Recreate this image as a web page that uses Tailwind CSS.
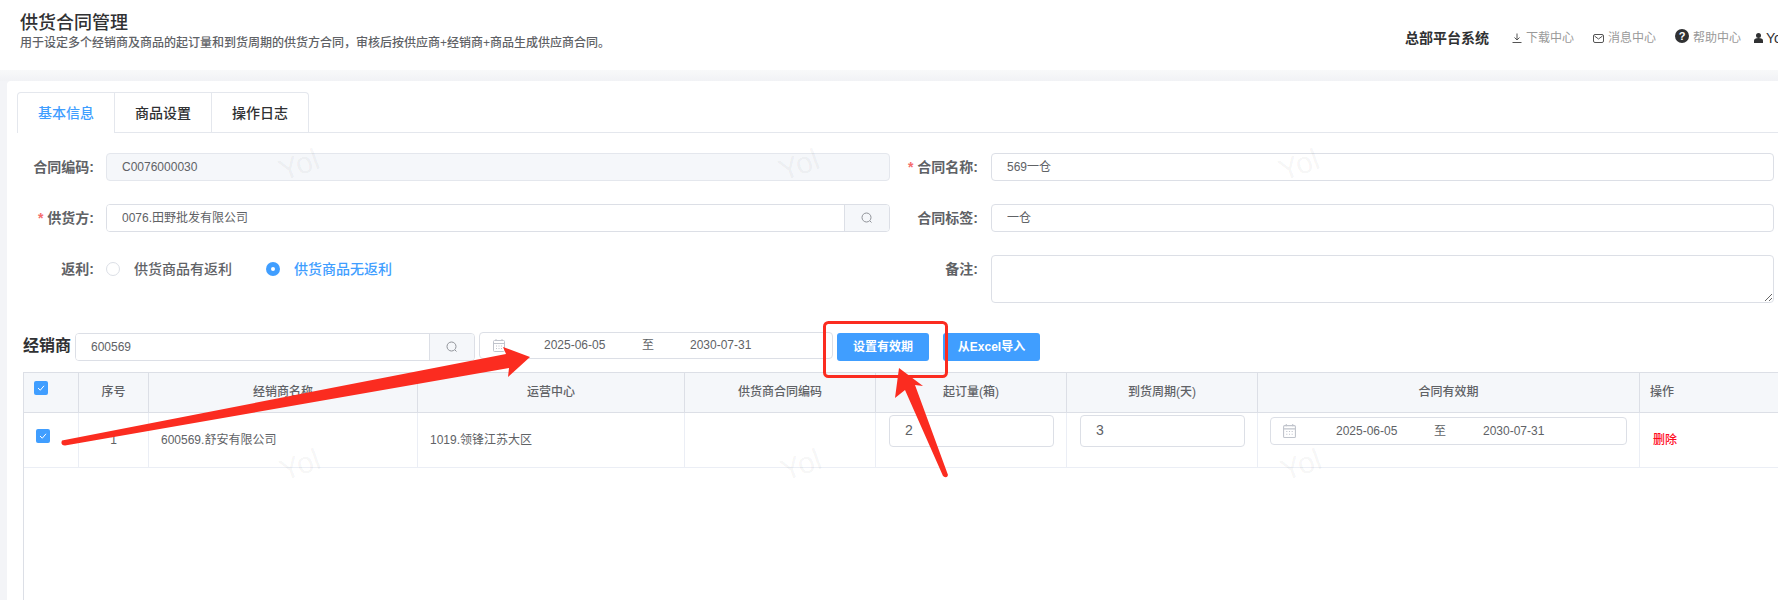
<!DOCTYPE html>
<html lang="zh-CN">
<head>
    <meta charset="UTF-8">
    <meta name="viewport" content="width=device-width, initial-scale=1.0">
    <title>供货合同管理</title>
    <script src="https://cdn.jsdelivr.net/npm/@tailwindcss/browser@4"></script>
</head>
<body class="relative w-[1778px] h-[600px] overflow-hidden bg-[#f3f4f7] text-[#606266] text-xs [font-family:'Liberation_Sans','Noto_Sans_CJK_SC',sans-serif]">

<!-- Header -->
<header class="flex h-[70px] bg-white">
    <div class="pl-5 pt-[11px]">
        <h1 class="text-lg leading-6 font-medium text-[#303133]">供货合同管理</h1>
        <p class="h-4 leading-4 text-xs font-medium text-[#606266]">用于设定多个经销商及商品的起订量和到货周期的供货方合同，审核后按供应商+经销商+商品生成供应商合同。</p>
    </div>
    <div class="ml-auto w-[373px] pt-[30px] flex items-start h-[46px] whitespace-nowrap overflow-hidden text-[#999]">
        <span class="shrink-0 w-[107px] text-sm leading-4 font-bold text-[#303133]">总部平台系统</span>
        <svg class="shrink-0 w-[10px] h-[10px] mt-[3px] mr-[4px]" viewBox="0 0 10 10" fill="none" stroke="#555" stroke-width="1"><path d="M5 0.5V6.5M2.5 4.5L5 7L7.5 4.5M0.5 9.5H9.5"/></svg>
        <span class="shrink-0 w-[67px] leading-4">下载中心</span>
        <svg class="shrink-0 w-[11px] h-[9px] mt-[4px] mr-[4px]" viewBox="0 0 11 9" fill="none" stroke="#555" stroke-width="1"><rect x="0.5" y="0.5" width="10" height="8" rx="1.5"/><path d="M1.5 2L5.5 5L9.5 2"/></svg>
        <span class="shrink-0 w-[67px] leading-4">消息中心</span>
        <span class="shrink-0 flex items-center justify-center w-[14px] h-[14px] -mt-[1px] mr-1 rounded-full bg-[#303133] text-white text-[11px] leading-none font-bold">?</span>
        <span class="shrink-0 w-[61px] leading-4">帮助中心</span>
        <svg class="shrink-0 w-[9px] h-[10px] mt-[3px] mr-[3px]" viewBox="0 0 9 10" fill="#303133"><circle cx="4.5" cy="2.5" r="2.5"/><path d="M0 10V7.5C0 6 1.5 5 4.5 5S9 6 9 7.5V10Z"/></svg>
        <span class="shrink-0 text-sm leading-4 text-[#303133]">Yol</span>
    </div>
</header>

<!-- Card -->
<main class="pt-[11px] pl-[7px] bg-[linear-gradient(#f8f9fa,#f1f2f5_11px,#f3f4f7_11px)]">
    <div class="h-[519px] bg-white rounded-tl pl-[10px] pt-[11px]">
        <!-- Tabs -->
        <div class="flex h-[41px] border-b border-[#e4e7ed] text-sm">
            <div class="flex items-center justify-center w-[98px] h-[41px] pb-px bg-white border border-b-0 border-[#e4e7ed] rounded-tl text-[#409eff] font-medium">基本信息</div>
            <div class="flex items-center justify-center w-[97px] h-[40px] border-t border-r border-[#e4e7ed] text-[#303133] font-medium">商品设置</div>
            <div class="flex items-center justify-center w-[97px] h-[40px] border-t border-r border-[#e4e7ed] rounded-tr text-[#303133] font-medium">操作日志</div>
        </div>

        <!-- Form -->
        <div class="mt-5 flex flex-col gap-[23px] pr-1">
            <div class="flex h-[28px]">
                <div class="flex w-[873px]">
                    <label class="w-[77px] text-right text-sm leading-[28px] font-semibold">合同编码:</label>
                    <div class="ml-3 flex-1 h-[28px] pl-[15px] leading-[26px] border border-[#e4e7ed] rounded bg-[#f5f7fa]">C0076000030</div>
                </div>
                <div class="flex flex-1">
                    <label class="w-[88px] text-right text-sm leading-[28px] font-semibold"><span class="text-[#f56c6c] mr-1">*</span>合同名称:</label>
                    <input value="569一仓" class="ml-[13px] flex-1 h-[28px] px-[15px] pb-[3px] border border-[#dcdfe6] rounded bg-white outline-none">
                </div>
            </div>
            <div class="flex h-[28px]">
                <div class="flex w-[873px]">
                    <label class="w-[77px] text-right text-sm leading-[28px] font-semibold"><span class="text-[#f56c6c] mr-1">*</span>供货方:</label>
                    <div class="ml-3 flex flex-1 h-[28px] border border-[#dcdfe6] rounded overflow-hidden">
                        <input value="0076.田野批发有限公司" class="flex-1 px-[15px] bg-white outline-none">
                        <div class="flex items-center justify-center w-[45px] bg-[#f5f7fa] border-l border-[#dcdfe6]">
                            <svg class="w-3 h-3" viewBox="0 0 12 12" fill="none" stroke="#909399" stroke-width="1"><circle cx="5.5" cy="5.5" r="4.5"/><path d="M9 9L10.5 10.5"/></svg>
                        </div>
                    </div>
                </div>
                <div class="flex flex-1">
                    <label class="w-[88px] text-right text-sm leading-[28px] font-semibold">合同标签:</label>
                    <input value="一仓" class="ml-[13px] flex-1 h-[28px] px-[15px] pb-[3px] border border-[#dcdfe6] rounded bg-white outline-none">
                </div>
            </div>
            <div class="flex h-[48px]">
                <div class="flex w-[873px]">
                    <label class="w-[77px] text-right text-sm leading-[28px] font-semibold">返利:</label>
                    <div class="ml-3 flex items-start h-[28px] pt-[7px] text-sm leading-[14px] font-medium">
                        <span class="w-[14px] h-[14px] rounded-full border border-[#dcdfe6] bg-white"></span>
                        <span class="ml-[14px] w-[98px]">供货商品有返利</span>
                        <span class="ml-[34px] flex items-center justify-center w-[14px] h-[14px] rounded-full bg-[#409eff]"><span class="w-1 h-1 rounded-full bg-white"></span></span>
                        <span class="ml-[14px] text-[#409eff]">供货商品无返利</span>
                    </div>
                </div>
                <div class="flex flex-1">
                    <label class="w-[88px] text-right text-sm leading-[28px] font-semibold">备注:</label>
                    <textarea class="ml-[13px] flex-1 h-[48px] px-[15px] py-1 border border-[#dcdfe6] rounded bg-white outline-none"></textarea>
                </div>
            </div>
        </div>

        <!-- Dealer toolbar -->
        <div class="mt-[30px] flex items-start h-[28px] pl-[6px]">
            <span class="w-[52px] text-base leading-[26px] font-bold text-[#303133]">经销商</span>
            <div class="flex w-[400px] h-[28px] border border-[#dcdfe6] rounded overflow-hidden">
                <input value="600569" class="flex-1 px-[15px] bg-white outline-none">
                <div class="flex items-center justify-center w-[45px] bg-[#f5f7fa] border-l border-[#dcdfe6]">
                    <svg class="w-3 h-3" viewBox="0 0 12 12" fill="none" stroke="#909399" stroke-width="1"><circle cx="5.5" cy="5.5" r="4.5"/><path d="M9 9L10.5 10.5"/></svg>
                </div>
            </div>
            <div class="ml-1 flex items-center w-[354px] h-[27px] -mt-[1px] pl-[13px] border border-[#dcdfe6] rounded leading-[25px] whitespace-nowrap">
                <svg class="w-3 h-[13px] shrink-0" viewBox="0 0 12 13" fill="none" stroke="#c0c4cc" stroke-width="1"><rect x="0.5" y="1.5" width="11" height="11" rx="1"/><path d="M0.5 4.5H11.5M3 0V2M9 0V2M3 7H4M5.5 7H6.5M8 7H9M3 9.5H4M5.5 9.5H6.5M8 9.5H9"/></svg>
                <span class="ml-[39px] w-[62px] -mt-px">2025-06-05</span>
                <span class="ml-[36px] w-3 -mt-px">至</span>
                <span class="ml-[36px] -mt-px">2030-07-31</span>
            </div>
            <button class="ml-1 w-[92px] h-[28px] bg-[#409eff] text-white font-bold rounded-[3px]">设置有效期</button>
            <button class="ml-[14px] w-[97px] h-[28px] bg-[#409eff] text-white font-bold rounded-[3px]">从Excel导入</button>
        </div>

        <!-- Table -->
        <div class="mt-[11px] ml-[6px] h-[228px] border-l border-t border-[#dcdfe6]">
            <table class="table-fixed w-[1755px] border-separate border-spacing-0">
                <thead>
                    <tr class="h-[40px] bg-[#f5f7fa]">
                        <th class="w-[55px] align-top pt-2 pl-[10px] text-left border-r border-b border-[#dcdfe6]">
                            <span class="flex items-center justify-center w-[14px] h-[14px] bg-[#409eff] rounded-[2px]"><svg class="w-[10px] h-[10px]" viewBox="0 0 10 10" fill="none" stroke="#fff" stroke-width="1"><path d="M2 5L4.3 7.2L8 2.8"/></svg></span>
                        </th>
                        <th class="w-[70px] pb-px font-medium border-r border-b border-[#dcdfe6]">序号</th>
                        <th class="w-[269px] pb-px font-medium border-r border-b border-[#dcdfe6]">经销商名称</th>
                        <th class="w-[267px] pb-px font-medium border-r border-b border-[#dcdfe6]">运营中心</th>
                        <th class="w-[191px] pb-px font-medium border-r border-b border-[#dcdfe6]">供货商合同编码</th>
                        <th class="w-[191px] pb-px font-medium border-r border-b border-[#dcdfe6]">起订量(箱)</th>
                        <th class="w-[191px] pb-px font-medium border-r border-b border-[#dcdfe6]">到货周期(天)</th>
                        <th class="w-[382px] pb-px font-medium border-r border-b border-[#dcdfe6]">合同有效期</th>
                        <th class="w-[139px] pb-px pl-[10px] text-left font-medium border-b border-[#dcdfe6]">操作</th>
                    </tr>
                </thead>
                <tbody>
                    <tr class="h-[55px]">
                        <td class="align-top pt-4 pl-3 border-r border-b border-[#ebeef5]">
                            <span class="flex items-center justify-center w-[14px] h-[14px] bg-[#409eff] rounded-[2px]"><svg class="w-[10px] h-[10px]" viewBox="0 0 10 10" fill="none" stroke="#fff" stroke-width="1"><path d="M2 5L4.3 7.2L8 2.8"/></svg></span>
                        </td>
                        <td class="text-center border-r border-b border-[#ebeef5]">1</td>
                        <td class="pl-3 border-r border-b border-[#ebeef5]">600569.舒安有限公司</td>
                        <td class="pl-3 border-r border-b border-[#ebeef5]">1019.领锋江苏大区</td>
                        <td class="border-r border-b border-[#ebeef5]"></td>
                        <td class="align-top pt-[2px] pl-[13px] border-r border-b border-[#ebeef5]">
                            <input value="2" class="block w-[165px] h-[32px] px-[15px] pb-[3px] text-sm border border-[#dcdfe6] rounded bg-white outline-none">
                        </td>
                        <td class="align-top pt-[2px] pl-[13px] border-r border-b border-[#ebeef5]">
                            <input value="3" class="block w-[165px] h-[32px] px-[15px] pb-[3px] text-sm border border-[#dcdfe6] rounded bg-white outline-none">
                        </td>
                        <td class="align-top pt-1 pl-3 border-r border-b border-[#ebeef5]">
                            <div class="flex items-center w-[357px] h-[28px] pl-[12px] border border-[#dcdfe6] rounded whitespace-nowrap">
                                <svg class="w-[13px] h-[14px] shrink-0" viewBox="0 0 12 13" fill="none" stroke="#c0c4cc" stroke-width="1"><rect x="0.5" y="1.5" width="11" height="11" rx="1"/><path d="M0.5 4.5H11.5M3 0V2M9 0V2M3 7H4M5.5 7H6.5M8 7H9M3 9.5H4M5.5 9.5H6.5M8 9.5H9"/></svg>
                                <span class="ml-[40px] w-[62px] -mt-px">2025-06-05</span>
                                <span class="ml-[36px] w-3 -mt-px">至</span>
                                <span class="ml-[37px] -mt-px">2030-07-31</span>
                            </div>
                        </td>
                        <td class="pl-[13px] border-b border-[#ebeef5] font-medium text-[#ff0a1e]">删除</td>
                    </tr>
                </tbody>
            </table>
        </div>
    </div>
</main>

<!-- Watermark -->
<div class="pointer-events-none">
    <span class="absolute left-[299px] top-[165px] -translate-x-1/2 -translate-y-1/2 -rotate-20 text-[30px] text-black/5">Yol</span>
    <span class="absolute left-[799px] top-[165px] -translate-x-1/2 -translate-y-1/2 -rotate-20 text-[30px] text-black/5">Yol</span>
    <span class="absolute left-[1299px] top-[165px] -translate-x-1/2 -translate-y-1/2 -rotate-20 text-[30px] text-black/5">Yol</span>
    <span class="absolute left-[300px] top-[465px] -translate-x-1/2 -translate-y-1/2 -rotate-20 text-[30px] text-black/5">Yol</span>
    <span class="absolute left-[801px] top-[465px] -translate-x-1/2 -translate-y-1/2 -rotate-20 text-[30px] text-black/5">Yol</span>
    <span class="absolute left-[1301px] top-[465px] -translate-x-1/2 -translate-y-1/2 -rotate-20 text-[30px] text-black/5">Yol</span>
</div>

<!-- Annotations -->
<svg class="absolute left-0 top-0 w-[1778px] h-[600px] pointer-events-none" viewBox="0 0 1778 600">
    <rect x="824.5" y="322.5" width="122" height="54" rx="4" fill="none" stroke="#fb2c20" stroke-width="3"/>
    <path d="M62 440.5L506 354L503 347L530 357L508 377L509 368L65 445.5Q60 445 62 440.5Z" fill="#fb2c20"/>
    <path d="M899 368L923 386L915 385L948 475Q947 479 943 476L905 390L895 398Z" fill="#fb2c20"/>
</svg>

</body>
</html>
